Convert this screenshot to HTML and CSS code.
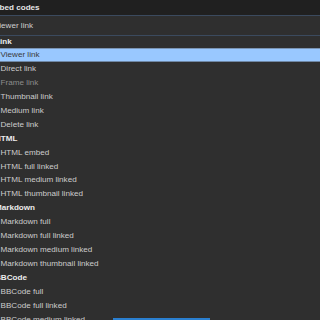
FILE: index.html
```html
<!DOCTYPE html>
<html lang="en">
<head>
    <title>Embed codes</title>
    <link rel="stylesheet" href="styles.css">
</head>
<body>
    <div class="panel">
        <div class="heading">Embed codes</div>
        <div class="picked">Viewer link</div>

        <ul class="list">
            <li class="label first">Link</li>
            <li class="option selected">Viewer link</li>
            <li class="option">Direct link</li>
            <li class="option disabled">Frame link</li>
            <li class="option">Thumbnail link</li>
            <li class="option">Medium link</li>
            <li class="option">Delete link</li>
            <li class="label">HTML</li>
            <li class="option">HTML embed</li>
            <li class="option">HTML full linked</li>
            <li class="option">HTML medium linked</li>
            <li class="option">HTML thumbnail linked</li>
            <li class="label">Markdown</li>
            <li class="option">Markdown full</li>
            <li class="option">Markdown full linked</li>
            <li class="option">Markdown medium linked</li>
            <li class="option">Markdown thumbnail linked</li>
            <li class="label">BBCode</li>
            <li class="option">BBCode full</li>
            <li class="option">BBCode full linked</li>
            <li class="option">BBCode medium linked</li>
            <li class="option">BBCode thumbnail linked</li>
        </ul>
    </div>
    <div class="progress"></div>
</body>
</html>
```
FILE: styles.css
```css
html, body {
    margin: 0;
    height: 320px;
    overflow: hidden;
    background-color: #2f2f2f;
}
body {
    position: relative;
    font-family: "Liberation Sans", Arial, sans-serif;
    font-size: 8.1px;
}
.panel {
    margin-left: -13px;
}
.heading {
    height: 15px;
    line-height: 15px;
    background-color: #202020;
    color: #e6e6e6;
    font-weight: bold;
    border-bottom: 1px solid #3b4a5e;
}
.picked {
    height: 19px;
    line-height: 19px;
    padding-left: 7px;
    color: #d0d0d0;
    border-bottom: 1px solid #3b4a5e;
}
.list {
    list-style: none;
    margin: 0;
    padding: 0;
}
.list li {
    height: 13.95px;
    line-height: 13.95px;
    white-space: nowrap;
}
.label {
    padding-left: 8px;
    color: #ececec;
    font-weight: bold;
}
.label.first {
    height: 12px;
    line-height: 12px;
}
.option {
    padding-left: 13.5px;
    color: #cdcdcd;
}
.option.disabled {
    color: #8c8c8c;
}
.option.selected {
    box-sizing: border-box;
    background-color: #99c8ff;
    color: #3a3a3a;
    border-top: 1px solid #7a94b4;
    border-bottom: 1px solid #6f88a6;
    line-height: 12px;
}
.progress {
    position: absolute;
    left: 113px;
    bottom: 0;
    width: 97px;
    height: 2px;
    background-color: #2a7fd0;
}
```
